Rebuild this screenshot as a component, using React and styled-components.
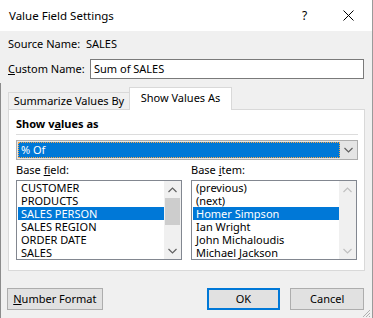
import React from "react";
import styled, { createGlobalStyle } from "styled-components";

const Global = createGlobalStyle`
  html, body { margin: 0; padding: 0; background: #f0f0f0; }
  body { font-family: "Noto Sans", "Open Sans", sans-serif; font-size: 11px; color: #000; }
  * { box-sizing: border-box; }
`;

const Dialog = styled.div`
  position: relative;
  width: 373px;
  height: 318px;
  background: #f0f0f0;
  border-right: 1px solid #9a9a9a;
  display: flex;
  flex-direction: column;
  overflow: hidden;
  white-space: nowrap;
  &::before {
    content: "";
    position: absolute;
    left: 0;
    top: 83px;
    bottom: 0;
    width: 1px;
    background: #8c8c8c;
  }
`;

const TitleBar = styled.div`
  height: 31px;
  background: #fff;
  display: flex;
  align-items: center;
  padding-left: 9px;
  line-height: 16px;
  font-size: 11.5px;
  flex: none;
`;

const Title = styled.div`
  flex: 1;
`;

const HelpGlyph = styled.div`
  width: 12px;
  margin-right: 28px;
  font-size: 12px;
`;

const CloseBox = styled.div`
  width: 12px;
  height: 12px;
  margin-right: 18px;
  display: flex;
  align-items: center;
  justify-content: center;
`;

const Body = styled.div`
  flex: 1;
  display: flex;
  flex-direction: column;
  padding: 5px 8px 0 8px;
  line-height: 16px;
`;

const InfoRow = styled.div`
  display: flex;
  align-items: center;
  height: ${(p) => p.$h || 16}px;
  margin-top: ${(p) => p.$mt || 0}px;
`;

const Label = styled.span`
  width: ${(p) => p.$w}px;
  flex: none;
`;

const U = styled.span`
  text-decoration: underline;
  text-underline-offset: 1px;
`;

const TextInput = styled.div`
  width: 276px;
  height: 20px;
  border: 1px solid #7a7a7a;
  background: #fff;
  padding-left: 3px;
  display: flex;
  align-items: center;
`;

const TabStrip = styled.div`
  display: flex;
  align-items: flex-end;
  height: 22px;
  margin-top: 8px;
  position: relative;
  z-index: 1;
`;

const Tab = styled.div`
  height: ${(p) => (p.$active ? 23 : 17)}px;
  margin-bottom: ${(p) => (p.$active ? -1 : 0)}px;
  width: ${(p) => p.$w}px;
  border: 1px solid #d9d9d9;
  border-bottom: none;
  border-right: ${(p) => (p.$active ? "1px solid #d9d9d9" : "none")};
  background: ${(p) => (p.$active ? "#fff" : "#f0f0f0")};
  display: flex;
  align-items: center;
  justify-content: center;
  padding-bottom: ${(p) => (p.$active ? 2 : 0)}px;
`;

const Panel = styled.div`
  width: 357px;
  height: 162px;
  border: 1px solid #d9d9d9;
  background: #fff;
  padding: 6px 6px 0 7px;
  display: flex;
  flex-direction: column;
`;

const Heading = styled.div`
  font-weight: bold;
  height: 16px;
`;

const Separator = styled.div`
  height: 1px;
  background: #dcdcdc;
  margin-top: 2px;
`;

const Combo = styled.div`
  margin-top: 5px;
  height: 20px;
  border: 1px solid #adadad;
  background: #e5e5e5;
  display: flex;
  padding: 1px 0 1px 1px;
`;

const ComboValue = styled.div`
  flex: 1;
  background: #0078d7;
  color: #fff;
  border: 1px dotted #f7a64a;
  padding-left: 2px;
  display: flex;
  align-items: center;
  line-height: 14px;
`;

const ComboButton = styled.div`
  width: 17px;
  flex: none;
  display: flex;
  align-items: center;
  justify-content: center;
`;

const Columns = styled.div`
  display: grid;
  grid-template-columns: 166px 166px;
  column-gap: 9px;
  margin-top: 2px;
`;

const Column = styled.div`
  display: flex;
  flex-direction: column;
`;

const FieldLabel = styled.div`
  height: 16px;
  margin-bottom: 2px;
`;

const ListBox = styled.div`
  height: 80px;
  border: 1px solid #828790;
  background: #fff;
  display: flex;
  padding-left: 1px;
`;

const Items = styled.div`
  flex: 1;
  display: flex;
  flex-direction: column;
`;

const Item = styled.div`
  height: 13px;
  line-height: 13px;
  padding-left: 3px;
  background: ${(p) => (p.$selected ? "#0078d7" : "transparent")};
  color: ${(p) => (p.$selected ? "#fff" : "#000")};
`;

const ScrollBar = styled.div`
  width: 17px;
  flex: none;
  background: #f0f0f0;
  display: flex;
  flex-direction: column;
`;

const ScrollArrow = styled.div`
  height: 17px;
  flex: none;
  display: flex;
  align-items: center;
  justify-content: center;
`;

const ScrollTrack = styled.div`
  flex: 1;
  display: flex;
  flex-direction: column;
`;

const Thumb = styled.div`
  height: 27px;
  margin: 0 1px;
  background: #cdcdcd;
`;

const ButtonRow = styled.div`
  display: flex;
  align-items: center;
  margin-top: 17px;
  margin-left: -1px;
  gap: 10px;
`;

const Button = styled.div`
  width: ${(p) => p.$w}px;
  height: 22px;
  border: ${(p) => (p.$default ? "2px solid #0078d7" : "1px solid #adadad")};
  background: #e1e1e1;
  display: flex;
  align-items: center;
  justify-content: center;
  margin-left: ${(p) => p.$ml || 0}px;
`;

const Grip = styled.svg`
  position: absolute;
  right: 1px;
  bottom: 0;
`;

const Chevron = ({ up, color = "#606060" }) => (
  <svg width="9" height="6" viewBox="0 0 9 6">
    <path
      d={up ? "M0.5 5 L4.5 1 L8.5 5" : "M0.5 1 L4.5 5 L8.5 1"}
      fill="none"
      stroke={color}
      strokeWidth="1.2"
    />
  </svg>
);

const Scroll = ({ disabled }) => {
  const c = disabled ? "#c0c0c0" : "#606060";
  return (
    <ScrollBar>
      <ScrollArrow>
        <Chevron up color={c} />
      </ScrollArrow>
      <ScrollTrack>{!disabled && <Thumb />}</ScrollTrack>
      <ScrollArrow>
        <Chevron color={c} />
      </ScrollArrow>
    </ScrollBar>
  );
};

const fields = ["CUSTOMER", "PRODUCTS", "SALES PERSON", "SALES REGION", "ORDER DATE", "SALES"];
const items = ["(previous)", "(next)", "Homer Simpson", "Ian Wright", "John Michaloudis", "Michael Jackson"];

export default function App() {
  return (
    <>
      <Global />
      <Dialog>
        <TitleBar>
          <Title>Value Field Settings</Title>
          <HelpGlyph>?</HelpGlyph>
          <CloseBox>
            <svg width="11" height="11" viewBox="0 0 11 11">
              <path d="M0.5 0.5 L10.5 10.5 M10.5 0.5 L0.5 10.5" stroke="#000" strokeWidth="1" />
            </svg>
          </CloseBox>
        </TitleBar>
        <Body>
          <InfoRow>
            <Label $w={78}>Source Name:</Label>
            <span>SALES</span>
          </InfoRow>
          <InfoRow $h={20} $mt={7}>
            <Label $w={82}>
              <U>C</U>ustom Name:
            </Label>
            <TextInput>Sum of SALES</TextInput>
          </InfoRow>
          <TabStrip>
            <Tab $w={121}>Summarize Values By</Tab>
            <Tab $active $w={103}>Show Values As</Tab>
          </TabStrip>
          <Panel>
            <Heading>
              Show v<U>a</U>lues as
            </Heading>
            <Separator />
            <Combo>
              <ComboValue>% Of</ComboValue>
              <ComboButton>
                <Chevron />
              </ComboButton>
            </Combo>
            <Columns>
              <Column>
                <FieldLabel>
                  Base <U>f</U>ield:
                </FieldLabel>
                <ListBox>
                  <Items>
                    {fields.map((f, i) => (
                      <Item key={f} $selected={i === 2}>{f}</Item>
                    ))}
                  </Items>
                  <Scroll />
                </ListBox>
              </Column>
              <Column>
                <FieldLabel>
                  Base <U>i</U>tem:
                </FieldLabel>
                <ListBox>
                  <Items>
                    {items.map((f, i) => (
                      <Item key={f} $selected={i === 2}>{f}</Item>
                    ))}
                  </Items>
                  <Scroll disabled />
                </ListBox>
              </Column>
            </Columns>
          </Panel>
          <ButtonRow>
            <Button $w={96}>
              <span>
                <U>N</U>umber Format
              </span>
            </Button>
            <Button $w={74} $default $ml={94}>OK</Button>
            <Button $w={74}>Cancel</Button>
          </ButtonRow>
        </Body>
        <Grip width="11" height="11" viewBox="0 0 11 11">
          <path d="M10 3 L3 10 M10 6 L6 10 M10 9 L9 10" stroke="#b0b0b0" strokeWidth="1" />
        </Grip>
      </Dialog>
    </>
  );
}
